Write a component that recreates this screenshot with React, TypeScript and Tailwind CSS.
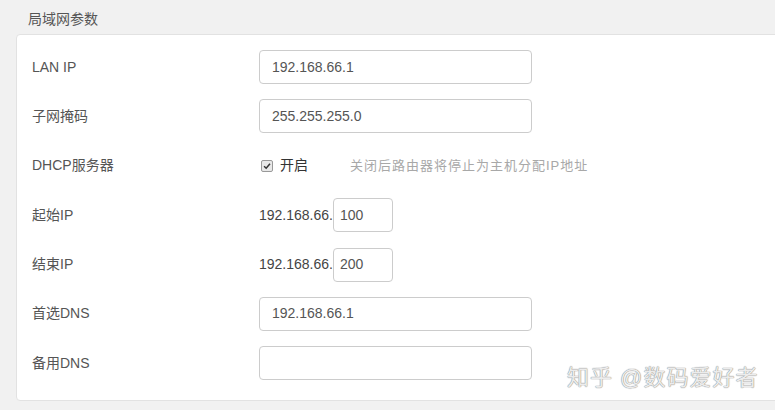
const font = { fontFamily: '"Liberation Sans", "Noto Sans CJK SC", sans-serif' }

function Row({ label, children }: { label: string; children: React.ReactNode }) {
  return (
    <div className="flex h-[34px] items-center">
      <div className="w-[227px] shrink-0 text-[14px] text-[#555]">{label}</div>
      <div className="flex items-center">{children}</div>
    </div>
  )
}

function TextBox({ value }: { value: string }) {
  return (
    <div className="flex h-[34px] w-[273px] items-center rounded-[4px] border border-[#cccccc] bg-white px-[12px] text-[14px] text-[#555]">
      {value}
    </div>
  )
}

function ShortBox({ value }: { value: string }) {
  return (
    <div className="flex h-[34px] w-[60px] items-center rounded-[4px] border border-[#cccccc] bg-white px-[6px] text-[14px] text-[#555]">
      {value}
    </div>
  )
}

export default function App() {
  return (
    <main className="relative h-[410px] w-[775px] overflow-hidden bg-[#f1f1f1]" style={font}>
      <div className="pl-[28px] pt-[10px] text-[14px] leading-[18px] text-[#555]">局域网参数</div>

      <section className="ml-[16px] mt-[6px] w-[775px] rounded-[4px] border border-[#e2e2e2] bg-white pb-[20px] pl-[15px] pt-[15px]">
        <div className="flex flex-col gap-[15.4px]">
          <Row label="LAN IP">
            <TextBox value="192.168.66.1" />
          </Row>
          <Row label="子网掩码">
            <TextBox value="255.255.255.0" />
          </Row>
          <Row label="DHCP服务器">
            <span className="ml-[2px] flex h-[12px] w-[12px] items-center justify-center rounded-[2px] border border-[#999] bg-[#e8e8e8]">
              <svg viewBox="0 0 12 12" className="h-[10px] w-[10px]">
                <path d="M2.5 6.2 L5 8.6 L9.6 3.2" fill="none" stroke="#333" strokeWidth="1.8" />
              </svg>
            </span>
            <span className="ml-[7px] text-[14px] text-[#333]">开启</span>
            <span className="ml-[42px] text-[13px] tracking-[1px] text-[#a8a8a8]">关闭后路由器将停止为主机分配IP地址</span>
          </Row>
          <Row label="起始IP">
            <span className="text-[14px] text-[#444]">192.168.66.</span>
            <ShortBox value="100" />
          </Row>
          <Row label="结束IP">
            <span className="text-[14px] text-[#444]">192.168.66.</span>
            <ShortBox value="200" />
          </Row>
          <Row label="首选DNS">
            <TextBox value="192.168.66.1" />
          </Row>
          <Row label="备用DNS">
            <TextBox value="" />
          </Row>
        </div>
      </section>

      <div
        className="absolute left-[567px] top-[364px] text-[22px] leading-[28px] tracking-[1px] text-[#ececec]"
        style={{ textShadow: '0 0 1px #8a8a8a, 0 0 1px #8a8a8a' }}
      >
        知乎 @数码爱好者
      </div>
    </main>
  )
}
